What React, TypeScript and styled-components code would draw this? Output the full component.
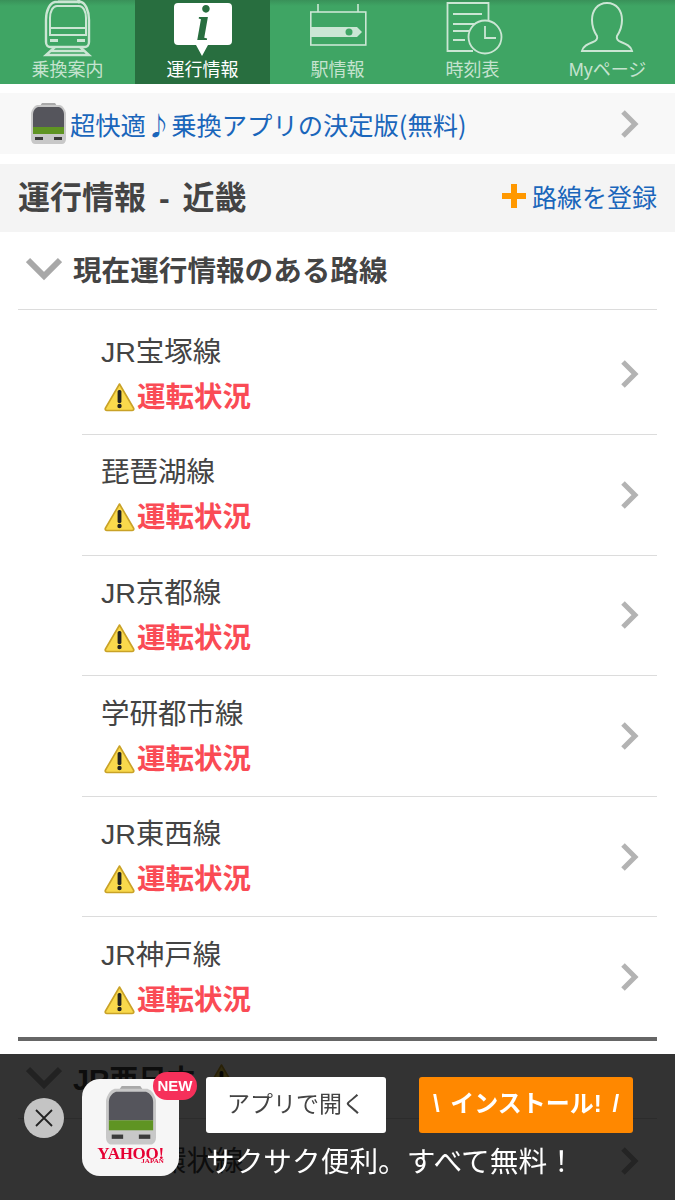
import React from 'react';
import styled, { createGlobalStyle } from 'styled-components';

const GlobalStyle = createGlobalStyle`
    html, body {
        margin: 0;
        padding: 0;
        height: 1200px;
        overflow: hidden;
        background: #fff;
        font-family: "Liberation Sans", "Noto Sans CJK JP", sans-serif;
    }
`;

const lines = ['JR宝塚線', '琵琶湖線', 'JR京都線', '学研都市線', 'JR東西線', 'JR神戸線'];

const TrainTabIcon = () => (
    <svg width="135" height="60" viewBox="0 0 135 60" fill="none" stroke="#cbe6d4" strokeWidth="2">
        <path d="M58 -1h20l2 4" stroke="#cbe6d4" strokeWidth="3" />
        <path d="M46 20c0-10 4-17 9-18h26c4 1 8 8 8 18v22c0 3-2 5-4 5H50c-2 0-4-2-4-5z" strokeWidth="2.4" />
        <path d="M50 28V18c0-7 3-12 7-12h22c4 0 7 5 7 12v10z" />
        <path d="M50 28v7h36v-7" />
        <rect x="50" y="39" width="8" height="3" fill="#cbe6d4" stroke="none" />
        <rect x="77" y="39" width="8" height="3" fill="#cbe6d4" stroke="none" />
        <path d="M55 47l-9 8h43l-9-8M51 51h33" strokeWidth="2.4" />
    </svg>
);

const InfoTabIcon = () => (
    <svg width="135" height="60" viewBox="0 0 135 60">
        <path d="M43 3h50a4 4 0 0 1 4 4v34a4 4 0 0 1-4 4H73l-6 11-6-11H43a4 4 0 0 1-4-4V7a4 4 0 0 1 4-4z" fill="#fff" />
        <text x="68" y="40" textAnchor="middle" fontFamily="'Liberation Serif', serif" fontStyle="italic" fontWeight="700" fontSize="50" fill="#286e3f">
            i
        </text>
    </svg>
);

const SignTabIcon = () => (
    <svg width="135" height="60" viewBox="0 0 135 60" fill="none" stroke="#cbe6d4" strokeWidth="1.6">
        <path d="M48 4v8M88 4v8" />
        <rect x="40.8" y="12" width="55" height="33" />
        <path d="M41 27h46l5 5-5 5H41z" fill="#cbe6d4" stroke="none" />
        <circle cx="79" cy="32" r="3.5" fill="#3fa564" stroke="none" />
    </svg>
);

const TimetableTabIcon = () => (
    <svg width="135" height="60" viewBox="0 0 135 60" fill="none" stroke="#cbe6d4" strokeWidth="1.8">
        <path d="M68 51H42.500V3h41v19" />
        <path d="M48 14h29M48 24h25M48 31h17M48 40h12" />
        <circle cx="80" cy="37" r="16.500" fill="#3fa564" />
        <path d="M80 26v12h11" />
    </svg>
);

const PersonTabIcon = () => (
    <svg width="135" height="60" viewBox="0 0 135 60" fill="none" stroke="#cbe6d4" strokeWidth="2">
        <path d="M67 3c-10 0-15 8-15 17 0 7 3 13 5 16 1 3-1 5-4 6-5 2-10 4-11 9h50c-1-5-6-7-11-9-3-1-5-3-4-6 2-3 5-9 5-16 0-9-5-17-15-17z" />
    </svg>
);

const TrainIcon = ({ size }: { size: number }) => (
    <svg width={size} height={(size * 41) / 35} viewBox="0 0 35 41">
        <path d="M11 0h13l2 3H9z" fill="#a9a9a9" />
        <path d="M6 2h23c3 1 5 4 6 8v26c0 3-2 5-4 5H4c-2 0-4-2-4-5V10c1-4 3-7 6-8z" fill="#c8c8c8" />
        <path d="M7 4h21c3 1 5 4 5 7v13H2V11c0-3 2-6 5-7z" fill="#55555c" />
        <rect x="2" y="24" width="31" height="7" fill="#5f9423" />
        <rect x="4" y="34" width="8" height="3" fill="#3b3b3b" />
        <rect x="23" y="34" width="8" height="3" fill="#3b3b3b" />
    </svg>
);

const Chevron = () => (
    <svg width="20" height="28" viewBox="0 0 20 28" fill="none" stroke="#b3b3b3" strokeWidth="5">
        <path d="M3 2l12 12L3 26" />
    </svg>
);

const DownChevron = () => (
    <svg width="36" height="24" viewBox="0 0 36 24" fill="none" stroke="#a8a8a8" strokeWidth="6">
        <path d="M2 3l16 16L34 3" />
    </svg>
);

const WarningIcon = () => (
    <svg width="31" height="30" viewBox="0 0 31 30">
        <path d="M15.500 2L29.500 26c.8 1.500 0 2.500-1.500 2.500H3c-1.500 0-2.300-1-1.500-2.500z" fill="#f9d94c" stroke="#c9a227" strokeWidth="1.600" strokeLinejoin="round" />
        <rect x="13.600" y="8" width="3.800" height="13" rx="1.500" fill="#222" />
        <circle cx="15.500" cy="24" r="2.200" fill="#222" />
    </svg>
);

const App = () => {
    return (
        <Page>
            <GlobalStyle />
            <TabBar>
                <Tab>
                    <TrainTabIcon />
                    <TabLabel>乗換案内</TabLabel>
                </Tab>
                <Tab $active>
                    <InfoTabIcon />
                    <TabLabel $active>運行情報</TabLabel>
                </Tab>
                <Tab>
                    <SignTabIcon />
                    <TabLabel>駅情報</TabLabel>
                </Tab>
                <Tab>
                    <TimetableTabIcon />
                    <TabLabel>時刻表</TabLabel>
                </Tab>
                <Tab>
                    <PersonTabIcon />
                    <TabLabel>Myページ</TabLabel>
                </Tab>
            </TabBar>

            <Promo>
                <PromoLeft>
                    <TrainIcon size={35} />
                    <PromoText>超快適♪乗換アプリの決定版(無料)</PromoText>
                </PromoLeft>
                <Chevron />
            </Promo>

            <Header>
                <Title>運行情報 - 近畿</Title>
                <RegisterLink>
                    <PlusMark />
                    路線を登録
                </RegisterLink>
            </Header>

            <SectionHead>
                <DownChevron />
                <SectionTitle>現在運行情報のある路線</SectionTitle>
            </SectionHead>
            <LineList>
                {lines.map((name) => (
                    <LineRow key={name}>
                        <div>
                            <LineName>{name}</LineName>
                            <LineStatus>
                                <WarningIcon />
                                運転状況
                            </LineStatus>
                        </div>
                        <Chevron />
                    </LineRow>
                ))}
            </LineList>

            <SectionHead>
                <DownChevron />
                <SectionTitle>JR西日本</SectionTitle>
                <WarningIcon />
            </SectionHead>
            <ShortRow>
                <LineName>大阪環状線</LineName>
                <Chevron />
            </ShortRow>

            <AppBanner>
                <CloseButton>
                    <svg width="20" height="20" viewBox="0 0 20 20" stroke="#222" strokeWidth="1.800">
                        <path d="M2 2l16 16M18 2L2 18" />
                    </svg>
                </CloseButton>
                <AppIcon>
                    <TrainIcon size={50} />
                    <YahooMark>
                        YAHOO!
                        <JapanMark>JAPAN</JapanMark>
                    </YahooMark>
                    <NewBadge>NEW</NewBadge>
                </AppIcon>
                <BannerBody>
                    <BannerButtons>
                        <OpenButton>アプリで開く</OpenButton>
                        <InstallButton>\ インストール! /</InstallButton>
                    </BannerButtons>
                    <BannerText>サクサク便利。すべて無料！</BannerText>
                </BannerBody>
            </AppBanner>
        </Page>
    );
};

export default App;

const Page = styled.div`
    width: 675px;
    height: 1200px;
    overflow: hidden;
    background: #fff;
    color: #444;
`;

const TabBar = styled.div`
    display: flex;
    height: 84px;
    background: linear-gradient(#399159 0, #3fa564 6px);
`;

const Tab = styled.div<{ $active?: boolean }>`
    width: 135px;
    height: 84px;
    display: flex;
    flex-direction: column;
    align-items: center;
    background: ${(p) => (p.$active ? '#286e3f' : 'transparent')};
`;

const TabLabel = styled.div<{ $active?: boolean }>`
    font-size: 18px;
    line-height: 22px;
    margin-top: -1px;
    color: ${(p) => (p.$active ? '#fff' : '#c5e3cf')};
`;

const Promo = styled.div`
    margin-top: 9px;
    height: 61px;
    padding: 0 35px 0 31px;
    background: #f8f8f8;
    display: flex;
    align-items: center;
    justify-content: space-between;
`;

const PromoLeft = styled.div`
    display: flex;
    align-items: center;
    gap: 4px;
`;

const PromoText = styled.span`
    font-family: "Noto Sans CJK JP", sans-serif;
    font-size: 25.3px;
    color: #1a66bb;
    white-space: nowrap;
`;

const Header = styled.div`
    margin-top: 10px;
    height: 68px;
    box-sizing: border-box;
    padding: 0 18px 4px;
    background: #f4f4f4;
    display: flex;
    align-items: center;
    justify-content: space-between;
`;

const Title = styled.h1`
    margin: 0 0 2px;
    font-size: 32px;
    font-weight: 700;
    word-spacing: 4px;
    color: #444;
`;

const RegisterLink = styled.div`
    display: flex;
    align-items: center;
    gap: 6px;
    font-size: 25px;
    color: #1a66bb;
`;

const PlusMark = styled.span`
    width: 24px;
    height: 24px;
    background:
        linear-gradient(#ff9800, #ff9800) center / 24px 6px no-repeat,
        linear-gradient(#ff9800, #ff9800) center / 6px 24px no-repeat;
`;

const SectionHead = styled.div`
    margin: 0 18px;
    height: 78px;
    box-sizing: border-box;
    padding: 0 0 3px 8px;
    border-bottom: 1.500px solid #dcdcdc;
    display: flex;
    align-items: center;
    gap: 11px;
`;

const SectionTitle = styled.h2`
    margin: 0 0 2px;
    font-size: 28.600px;
    font-weight: 700;
    color: #444;
`;

const LineList = styled.div`
    margin: 0 18px;
    padding-top: 4.500px;
    border-bottom: 4px solid #666;

    & > div:last-child {
        height: 119.600px;
        border-bottom: none;
    }
`;

const LineRow = styled.div`
    margin-left: 64px;
    height: 120.600px;
    box-sizing: border-box;
    padding: 0 17px 0 19px;
    border-bottom: 1.500px solid #dcdcdc;
    display: flex;
    align-items: center;
    justify-content: space-between;
`;

const ShortRow = styled.div`
    margin: 0 18px 0 82px;
    height: 84px;
    padding: 0 17px 0 19px;
    display: flex;
    align-items: center;
    justify-content: space-between;
`;

const LineName = styled.div`
    font-size: 28.500px;
    line-height: 46px;
    color: #444;
`;

const LineStatus = styled.div`
    display: flex;
    align-items: center;
    gap: 2px;
    margin: -1px 0 0 3px;
    font-size: 28.500px;
    line-height: 46px;
    font-weight: 700;
    color: #fa4b55;
`;

const AppBanner = styled.div`
    position: fixed;
    left: 0;
    top: 1054px;
    width: 675px;
    height: 146px;
    box-sizing: border-box;
    padding: 25px 0 0 24px;
    background: rgba(0, 0, 0, 0.8);
    display: flex;
    align-items: flex-start;
`;

const CloseButton = styled.div`
    width: 40px;
    height: 40px;
    margin-top: 19px;
    border-radius: 50%;
    background: #c4c4c4;
    display: flex;
    align-items: center;
    justify-content: center;
`;

const AppIcon = styled.div`
    position: relative;
    width: 97px;
    height: 97px;
    margin-left: 18px;
    padding-top: 7px;
    box-sizing: border-box;
    border-radius: 18px;
    background: #f6f6f6;
    display: flex;
    flex-direction: column;
    align-items: center;
`;

const YahooMark = styled.div`
    position: relative;
    font-family: "Liberation Serif", serif;
    font-weight: 700;
    font-size: 17px;
    line-height: 17px;
    letter-spacing: -0.3px;
    color: #e60033;
`;

const JapanMark = styled.span`
    position: absolute;
    right: 0;
    top: 12px;
    font-size: 7px;
    line-height: 8px;
    letter-spacing: 0;
`;

const NewBadge = styled.div`
    position: absolute;
    left: 71px;
    top: -7px;
    width: 44px;
    height: 28px;
    border-radius: 14px;
    background: #f6305a;
    color: #fff;
    font-family: "Liberation Sans", sans-serif;
    font-weight: 700;
    font-size: 15px;
    line-height: 28px;
    text-align: center;
`;

const BannerBody = styled.div`
    margin-left: 27px;
    margin-top: -2px;
`;

const BannerButtons = styled.div`
    display: flex;
    gap: 33px;
`;

const OpenButton = styled.div`
    width: 180px;
    height: 56px;
    border-radius: 3px;
    background: #fff;
    color: #444;
    font-size: 23px;
    line-height: 54px;
    text-align: center;
`;

const InstallButton = styled.div`
    width: 214px;
    height: 56px;
    border-radius: 3px;
    background: #ff8800;
    color: #fff;
    font-size: 24px;
    font-weight: 700;
    word-spacing: 4px;
    line-height: 54px;
    text-align: center;
    white-space: nowrap;
`;

const BannerText = styled.div`
    margin-top: 9px;
    font-size: 28.700px;
    line-height: 40px;
    color: #fff;
    white-space: nowrap;
`;
